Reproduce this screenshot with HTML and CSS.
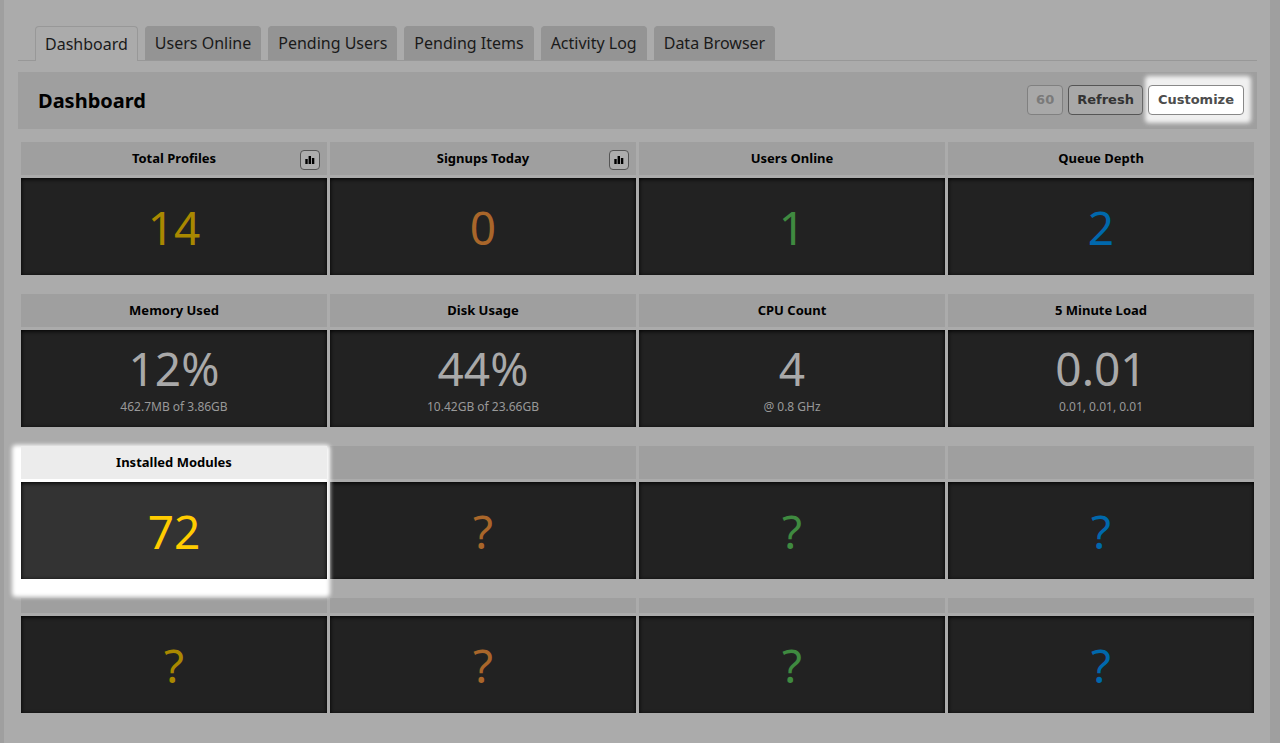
FILE: index.html
```html
<!DOCTYPE html>
<html lang="en">
<head>
<meta charset="utf-8">
<title>Dashboard</title>
<link rel="stylesheet" href="styles.css">
</head>
<body>
<main class="panel">
  <nav class="tabs">
    <a class="tab active" href="#dashboard">Dashboard</a>
    <a class="tab" href="#online">Users Online</a>
    <a class="tab" href="#pending-users">Pending Users</a>
    <a class="tab" href="#pending-items">Pending Items</a>
    <a class="tab" href="#activity">Activity Log</a>
    <a class="tab" href="#browser">Data Browser</a>
  </nav>
  <header class="title-bar">
    <h1>Dashboard</h1>
    <div class="actions">
      <button class="btn" type="button" disabled>60</button>
      <button class="btn" type="button">Refresh</button>
      <span class="spotlight spot-button"><button class="btn lit" type="button">Customize</button></span>
    </div>
  </header>
  <section class="widgets">
    <article class="widget">
      <h2>Total Profiles<button class="chart" type="button" aria-label="Total Profiles chart"><svg viewBox="0 0 10 10"><path d="M0.3 4h2.4v5H0.3zM3.6 1h2.4v8H3.6zM6.9 3h2.4v6H6.9z"/></svg></button></h2>
      <div class="tile"><span class="value yellow">14</span></div>
    </article>
    <article class="widget">
      <h2>Signups Today<button class="chart" type="button" aria-label="Signups Today chart"><svg viewBox="0 0 10 10"><path d="M0.3 4h2.4v5H0.3zM3.6 1h2.4v8H3.6zM6.9 3h2.4v6H6.9z"/></svg></button></h2>
      <div class="tile"><span class="value orange">0</span></div>
    </article>
    <article class="widget"><h2>Users Online</h2><div class="tile"><span class="value green">1</span></div></article>
    <article class="widget"><h2>Queue Depth</h2><div class="tile"><span class="value blue">2</span></div></article>

    <article class="widget"><h2>Memory Used</h2><div class="tile"><span class="value">12%</span><span class="note">462.7MB of 3.86GB</span></div></article>
    <article class="widget"><h2>Disk Usage</h2><div class="tile"><span class="value">44%</span><span class="note">10.42GB of 23.66GB</span></div></article>
    <article class="widget"><h2>CPU Count</h2><div class="tile"><span class="value">4</span><span class="note">@ 0.8 GHz</span></div></article>
    <article class="widget"><h2>5 Minute Load</h2><div class="tile"><span class="value">0.01</span><span class="note">0.01, 0.01, 0.01</span></div></article>

    <article class="widget spotlight spot-widget"><h2>Installed Modules</h2><div class="tile"><span class="value">72</span></div></article>
    <article class="widget"><h2></h2><div class="tile"><span class="value orange">?</span></div></article>
    <article class="widget"><h2></h2><div class="tile"><span class="value green">?</span></div></article>
    <article class="widget"><h2></h2><div class="tile"><span class="value blue">?</span></div></article>

    <article class="widget short"><h2></h2><div class="tile"><span class="value yellow">?</span></div></article>
    <article class="widget short"><h2></h2><div class="tile"><span class="value orange">?</span></div></article>
    <article class="widget short"><h2></h2><div class="tile"><span class="value green">?</span></div></article>
    <article class="widget short"><h2></h2><div class="tile"><span class="value blue">?</span></div></article>
  </section>
</main>
</body>
</html>
```

FILE: styles.css
```css
* { box-sizing: border-box; }

body {
  margin: 0;
  padding: 0 10px 0 4px;
  background: #9f9f9f;
  color: #000;
  font-family: "Noto Sans", "Open Sans", sans-serif;
}

.panel {
  min-height: 100vh;
  padding: 26px 13px 30px 14px;
  background: #ababab;
}

.tabs {
  display: flex;
  gap: 7px;
  padding-left: 17px;
  border-bottom: 1px solid #989898;
}

.tab {
  height: 34px;
  padding: 0 9px;
  border: 1px solid #949494;
  border-bottom: 0;
  border-radius: 4px 4px 0 0;
  background: #949494;
  color: #1a1a1a;
  font-size: 16px;
  line-height: 32px;
  text-decoration: none;
}

.tab.active {
  margin-bottom: -1px;
  height: 35px;
  border-color: #989898;
  background: #ababab;
  line-height: 34px;
}

.title-bar {
  display: flex;
  align-items: center;
  justify-content: space-between;
  min-height: 57px;
  margin: 11px 0 13px;
  padding: 0 13px 0 20px;
  background: #9f9f9f;
}

.title-bar h1 {
  margin: 0;
  font-size: 20px;
  line-height: 26px;
}

.actions {
  display: flex;
  gap: 5px;
  margin-bottom: 2px;
}

.btn {
  height: 30px;
  padding: 0 8px;
  border: 1px solid #555;
  border-radius: 4px;
  background: #a8a8a8;
  color: #333;
  font: bold 13px/26px "DejaVu Sans", sans-serif;
}

.btn:disabled {
  border-color: #808080;
  color: #7a7a7a;
}

.btn.lit {
  padding: 0 9px;
  border-color: #888;
  background: #fff;
  color: #4d4d4d;
}

/* Bright, soft-edged area behind a highlighted item */
.spotlight {
  position: relative;
  z-index: 1;
}

.spotlight::before {
  content: "";
  position: absolute;
  z-index: -1;
  border-radius: 4px;
  background: #fff;
  filter: blur(2px);
}

.spot-button::before {
  inset: -9px -7px -8px -3px;
  background: #f0f0f0;
}

.spot-widget::before { inset: -1px -3px -18px -9px; }

.widgets {
  display: grid;
  grid-template-columns: repeat(4, minmax(0, 1fr));
  gap: 19px 3px;
  padding: 0 3px;
}

.widget {
  display: flex;
  flex-direction: column;
  gap: 3px;
}

.widget h2 {
  position: relative;
  height: 33px;
  margin: 0;
  background: #9f9f9f;
  font-size: 13px;
  line-height: 33px;
  text-align: center;
}

.widget.short h2 { height: 15px; }

.chart {
  position: absolute;
  top: 8px;
  right: 7px;
  display: grid;
  place-items: center;
  width: 20px;
  height: 20px;
  padding: 0;
  border: 1px solid #555;
  border-radius: 4px;
  background: #adadad;
}

.chart svg {
  width: 10px;
  height: 10px;
}

.tile {
  display: flex;
  flex-direction: column;
  align-items: center;
  justify-content: center;
  height: 97px;
  background: #222;
  box-shadow: inset 0 1px 4px #000;
}

.value {
  color: #a9a9a9;
  font-size: 46px;
  line-height: 62px;
}

.note {
  margin-bottom: 6px;
  color: #999;
  font-size: 12px;
  line-height: 16px;
}

.yellow { color: #a98800; }
.orange { color: #a9662a; }
.green { color: #3f8a40; }
.blue { color: #0068ac; }

.spot-widget h2 { background: #ececec; }
.spot-widget .tile { background: #333; }
.spot-widget .value { color: #fc0; }
```
